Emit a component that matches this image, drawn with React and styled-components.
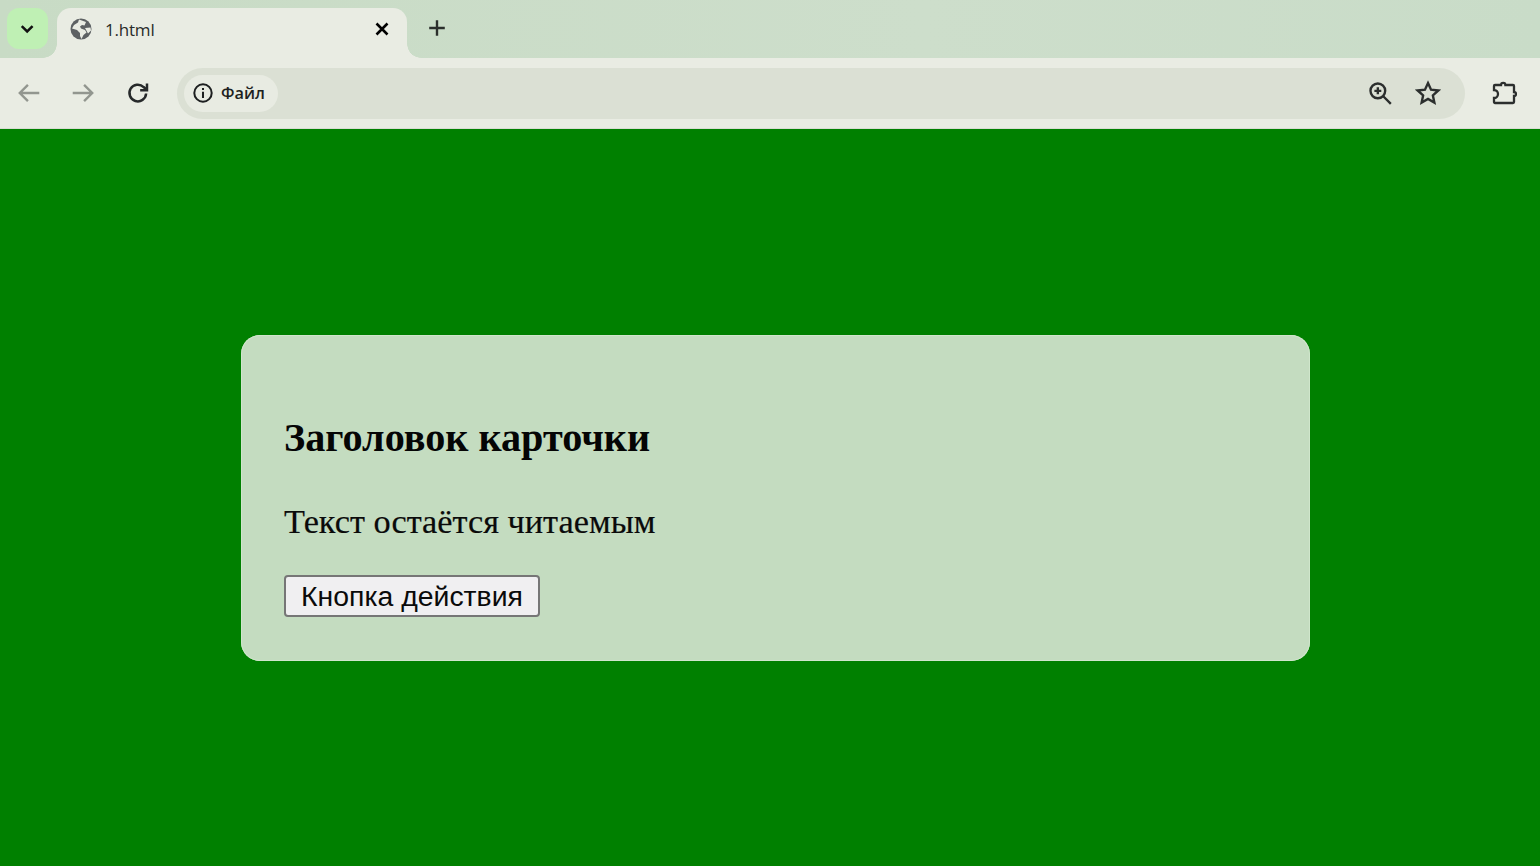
import React from "react";
import styled, { createGlobalStyle } from "styled-components";

const Global = createGlobalStyle`
  html, body { margin: 0; padding: 0; height: 100%; background: #008000; }
  #root { height: 866px; overflow: hidden; }
`;

const Window = styled.div`
  display: flex;
  flex-direction: column;
  width: 1540px;
  height: 866px;
  background: #008000;
`;

const TabStrip = styled.div`
  display: flex;
  align-items: flex-start;
  height: 50px;
  padding: 8px 0 0 7px;
  background: linear-gradient(90deg, #c8dbc5 0%, #cddecb 60%, #c9dcc8 100%);
`;

const TabGroupButton = styled.div`
  display: flex;
  align-items: center;
  justify-content: center;
  width: 41px;
  height: 41px;
  border-radius: 12px;
  background: #bff0b4;
  color: #111;
`;

const Tab = styled.div`
  position: relative;
  display: flex;
  align-items: center;
  width: 350px;
  height: 50px;
  margin-left: 9px;
  padding: 0 14px 8px 13px;
  box-sizing: border-box;
  border-radius: 14px 14px 0 0;
  background: #e9ece3;
  &::before, &::after {
    content: "";
    position: absolute;
    bottom: 0;
    width: 14px;
    height: 14px;
    background: radial-gradient(circle at var(--cx) 0, transparent 13.5px, #e9ece3 14px);
  }
  &::before { left: -14px; --cx: 0; }
  &::after { right: -14px; --cx: 100%; }
`;

const TabTitle = styled.span`
  flex: 1;
  margin-left: 13px;
  font: 17px/1 "Open Sans", "Liberation Sans", sans-serif;
  color: #2a2c2a;
  letter-spacing: -0.2px;
`;

const NewTab = styled.div`
  display: flex;
  margin: 9px 0 0 19px;
  color: #2b2f2c;
`;

const Toolbar = styled.div`
  display: flex;
  align-items: center;
  height: 71px;
  padding: 0 23px 1px 16px;
  box-sizing: border-box;
  background: #e9ece3;
  border-bottom: 1px solid #d9dcd3;
`;

const NavButton = styled.div`
  display: flex;
  width: 26px;
  height: 26px;
  margin-right: ${(p) => p.$gap}px;
  color: ${(p) => (p.$dim ? "#92968f" : "#26292a")};
`;

const Omnibox = styled.div`
  display: flex;
  align-items: center;
  flex: 1;
  height: 51px;
  padding: 0 24px 0 7px;
  border-radius: 26px;
  background: #dbe0d4;
  margin-top: 1px;
`;

const SiteChip = styled.div`
  display: flex;
  align-items: center;
  gap: 7px;
  height: 37px;
  padding: 0 13px 0 8px;
  border-radius: 19px;
  background: #e8ebe2;
  color: #1d1f20;
  font: 600 16.3px/1 "Open Sans", "Liberation Sans", sans-serif;
`;

const Spacer = styled.div`
  flex: 1;
`;

const OmniIcon = styled.div`
  display: flex;
  margin-left: ${(p) => p.$gap || 0}px;
  color: #2c2f2e;
`;

const ExtensionIcon = styled.div`
  display: flex;
  margin-left: 26px;
  color: #2c2f2e;
`;

const Page = styled.main`
  flex: 1;
  padding: 206px 0 0 241px;
  background: #008000;
`;

const Card = styled.section`
  width: 1069px;
  height: 326px;
  padding: 78px 43px 0;
  box-sizing: border-box;
  border-radius: 19px;
  background: #c4dcc0;
  box-shadow: inset 0 0 0 1px #d0e6cc;
`;

const Heading = styled.h2`
  margin: 0;
  font: bold 40.2px/50px "Liberation Serif", "Times New Roman", serif;
  color: #050505;
`;

const Body = styled.p`
  margin: 38px 0 0;
  font: 34.3px/40px "Liberation Serif", "Times New Roman", serif;
  color: #0a0a0a;
  -webkit-text-stroke: 0.2px #0a0a0a;
`;

const ActionButton = styled.button`
  display: block;
  width: 256px;
  height: 42px;
  margin: 34px 0 0;
  padding: 0;
  box-sizing: border-box;
  border: 2px solid #767676;
  border-radius: 4px;
  background: #f0eff1;
  font: 28.4px/1 "Liberation Sans", Arial, sans-serif;
  color: #0a0a0a;
`;

const Icon = ({ size = 24, sw = 2.2, children, vb = 24 }) => (
  <svg width={size} height={size} viewBox={`0 0 ${vb} ${vb}`} fill="none" stroke="currentColor" strokeWidth={sw}>
    {children}
  </svg>
);

export default function App() {
  return (
    <Window>
      <Global />
      <TabStrip>
        <TabGroupButton>
          <Icon size={20} sw={3}>
            <path d="M4.500 8.500l6.500 6.500 6.500-6.500" />
          </Icon>
        </TabGroupButton>
        <Tab>
          <svg width="22" height="22" viewBox="0 0 22 22">
            <circle cx="11" cy="11" r="10.500" fill="#5d6163" />
            <path
              d="M9 1.500l-1 3-4 2.500-2 3.500 5 1.500 3 3v3l1.500 3 2-4 3-2.500-1.500-2.500-4-1.500-1-2 2-1.500 2.500.5 1.500-3.500z M15 10l5.500-.5.500 3-3 3z"
              fill="#e9ece3"
            />
          </svg>
          <TabTitle>1.html</TabTitle>
          <Icon size={22} sw={2.8}>
            <path d="M6 6l12 12M18 6L6 18" />
          </Icon>
        </Tab>
        <NewTab>
          <Icon size={22} sw={2.6}>
            <path d="M12 3.500v17M3.500 12h17" />
          </Icon>
        </NewTab>
      </TabStrip>
      <Toolbar>
        <NavButton $dim $gap={28}>
          <Icon size={26} sw={2.2}>
            <path d="M21.500 12H4M11 4.500L3.500 12l7.500 7.500" />
          </Icon>
        </NavButton>
        <NavButton $dim $gap={29}>
          <Icon size={26} sw={2.2}>
            <path d="M2.500 12H20M13 4.500l7.500 7.500-7.500 7.500" />
          </Icon>
        </NavButton>
        <NavButton $gap={26}>
          <Icon size={26} sw={2.3}>
            <path d="M19.500 12.500a7.700 7.700 0 1 1-2.300-6L20 9" />
            <path d="M20.300 3.200V9.500H14" />
          </Icon>
        </NavButton>
        <Omnibox>
          <SiteChip>
            <Icon size={22} sw={2.2}>
              <circle cx="12" cy="12" r="9.500" />
              <path d="M12 10.500v7M12 6.500v2.200" />
            </Icon>
            Файл
          </SiteChip>
          <Spacer />
          <OmniIcon>
            <Icon size={26} sw={2.2}>
              <circle cx="10" cy="10" r="6.800" />
              <path d="M15 15l7 7M10 6.800v6.400M6.800 10h6.400" />
            </Icon>
          </OmniIcon>
          <OmniIcon $gap={22}>
            <Icon size={26} sw={2.2}>
              <path d="M12 2.800l2.800 6.200 6.700.7-5 4.500 1.400 6.700-5.900-3.400-5.900 3.400 1.400-6.700-5-4.500 6.700-.7z" />
            </Icon>
          </OmniIcon>
        </Omnibox>
        <ExtensionIcon>
          <Icon size={26} vb={26} sw={2.3}>
            <path d="M4 5H10a2.200 2.200 0 0 1 4.400 0H22a1 1 0 0 1 1 1V12a2 2 0 0 1 0 4V22a1 1 0 0 1-1 1H4a1 1 0 0 1-1-1V18a4 4 0 0 0 0-8V6a1 1 0 0 1 1-1z" />
          </Icon>
        </ExtensionIcon>
      </Toolbar>
      <Page>
        <Card>
          <Heading>Заголовок карточки</Heading>
          <Body>Текст остаётся читаемым</Body>
          <ActionButton>Кнопка действия</ActionButton>
        </Card>
      </Page>
    </Window>
  );
}
